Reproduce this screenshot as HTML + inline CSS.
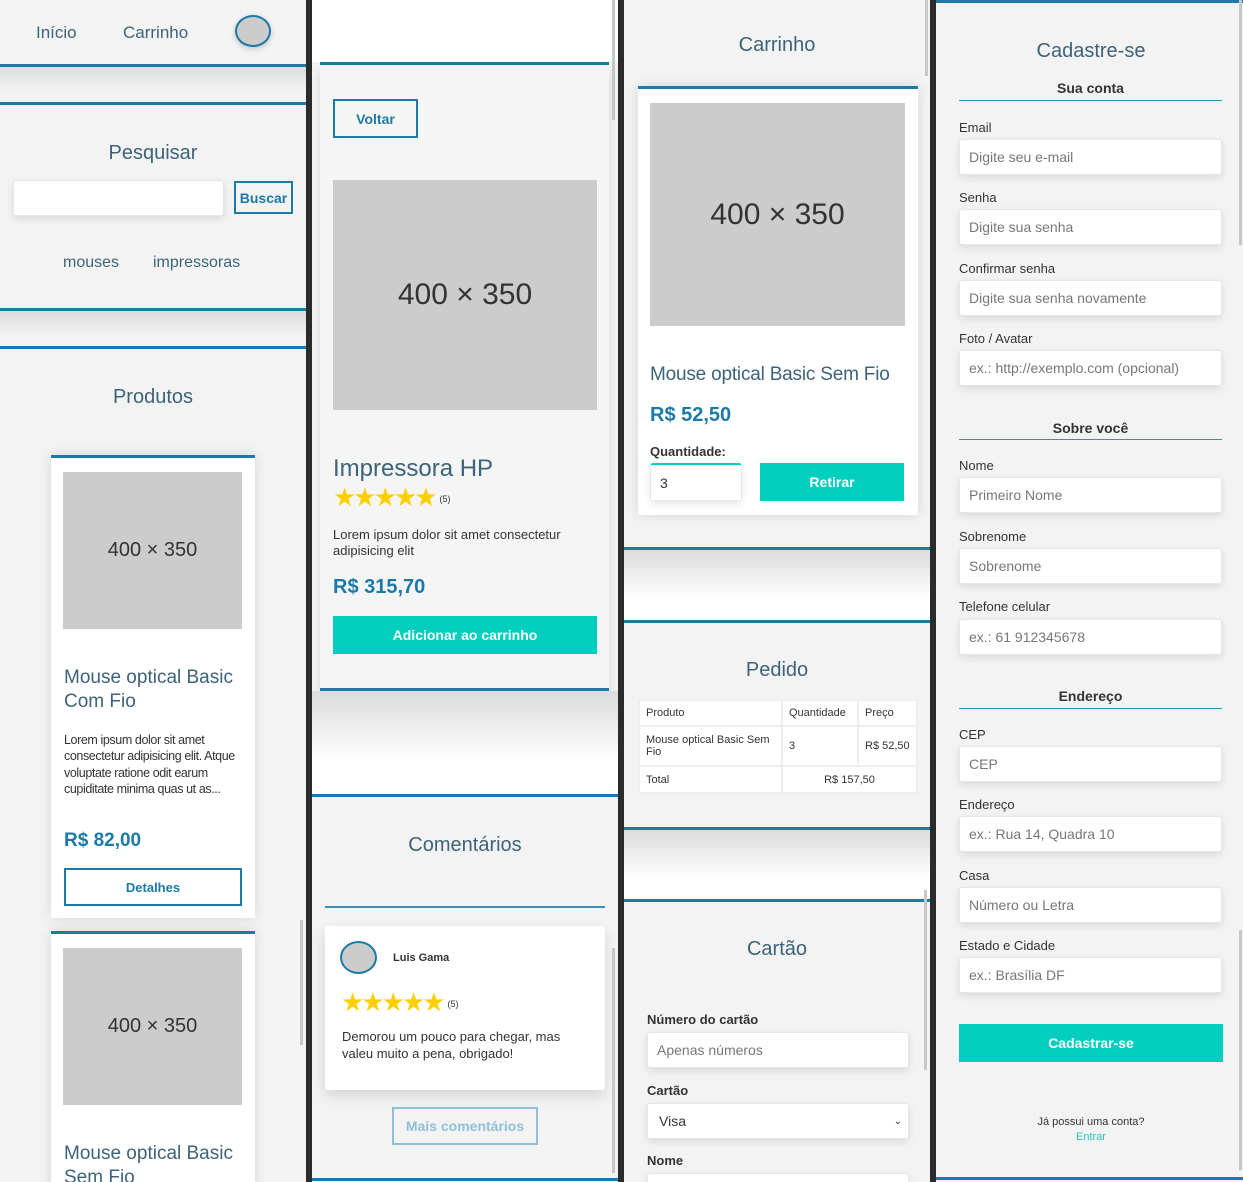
<!DOCTYPE html>
<html><head><meta charset="utf-8"><style>
*{margin:0;padding:0;box-sizing:border-box}
body{width:1243px;height:1182px;background:#2b2b2b;position:relative;overflow:hidden;font-family:"Liberation Sans",sans-serif;color:#333}
.p{position:absolute;top:0;height:1182px;background:#f3f3f3;overflow:hidden}
.a{position:absolute}
.line{position:absolute;height:3px;background:#1b7aa6}
.sh{position:absolute;background:linear-gradient(#dcdcdc,#f3f3f3 70%)}
.shw{position:absolute;background:linear-gradient(#dcdcdc,#fff 70%)}
.h{position:absolute;text-align:center;color:#3d6379;font-size:20px}
.ph{position:absolute;background:#ccc;color:#333;display:flex;align-items:center;justify-content:center}
.card{position:absolute;background:#fff;border-top:3px solid #1b7aa6;box-shadow:0 0 12px rgba(0,0,0,.12)}
.inp{position:absolute;background:#fff;border:1px solid #e6e6e6;border-radius:3px;box-shadow:0 3px 8px rgba(0,0,0,.1);font-size:14px;color:#777;padding-left:9px;display:flex;align-items:center}
.lbl{position:absolute;font-size:13px;color:#333}
.btn{position:absolute;background:#00cfc0;color:#fff;font-weight:bold;font-size:14px;display:flex;align-items:center;justify-content:center}
.ob{position:absolute;border:2px solid #1b7aa6;color:#1b7aa6;font-weight:bold;font-size:14px;display:flex;align-items:center;justify-content:center}
.stars{position:absolute;color:#fcd000;font-size:26px;letter-spacing:-3px;line-height:26px}
.stars sup{font-size:9px;color:#333;letter-spacing:0;vertical-align:top;position:relative;top:2px;left:5px}
.blue{color:#1b7aa6}
td{border:2px solid #eee;padding:4px 6px;font-size:11px;color:#333}
</style></head><body>

<!-- Panel 1 -->
<div class="p" style="left:0;width:306px">
 <div class="a" style="left:36px;top:23px;font-size:17px;color:#3d6379">Início</div>
 <div class="a" style="left:123px;top:23px;font-size:17px;color:#3d6379">Carrinho</div>
 <div class="a" style="left:235px;top:15px;width:36px;height:32px;border-radius:50%;background:#ccc;border:2px solid #1b7aa6;box-shadow:0 2px 6px rgba(0,0,0,.2)"></div>
 <div class="line" style="left:0;top:64px;width:306px"></div>
 <div class="sh" style="left:0;top:67px;width:306px;height:35px"></div>
 <div class="line" style="left:0;top:102px;width:306px"></div>
 <div class="h" style="left:0;top:142px;width:306px">Pesquisar</div>
 <div class="inp" style="left:13px;top:180px;width:211px;height:36px"></div>
 <div class="ob" style="left:234px;top:181px;width:59px;height:33px">Buscar</div>
 <div class="a" style="left:63px;top:254px;font-size:16px;color:#3d6379">mouses</div>
 <div class="a" style="left:153px;top:254px;font-size:16px;color:#3d6379">impressoras</div>
 <div class="line" style="left:0;top:308px;width:306px"></div>
 <div class="sh" style="left:0;top:311px;width:306px;height:35px"></div>
 <div class="line" style="left:0;top:346px;width:306px"></div>
 <div class="h" style="left:0;top:386px;width:306px">Produtos</div>
 <div class="card" style="left:51px;top:455px;width:204px;height:463px">
  <div class="ph" style="left:12px;top:14px;width:179px;height:157px;font-size:20px">400 × 350</div>
  <div class="a" style="left:13px;top:208px;font-size:19px;color:#3d6379;line-height:24px;width:185px">Mouse optical Basic Com Fio</div>
  <div class="a" style="left:13px;top:274px;font-size:12.5px;line-height:16.3px;width:182px;letter-spacing:-0.4px">Lorem ipsum dolor sit amet consectetur adipisicing elit. Atque voluptate ratione odit earum cupiditate minima quas ut as...</div>
  <div class="a blue" style="left:13px;top:372px;font-size:19px;font-weight:bold">R$ 82,00</div>
  <div class="ob" style="left:13px;top:410px;width:178px;height:38px;font-size:13px">Detalhes</div>
 </div>
 <div class="card" style="left:51px;top:931px;width:204px;height:300px">
  <div class="ph" style="left:12px;top:14px;width:179px;height:157px;font-size:20px">400 × 350</div>
  <div class="a" style="left:13px;top:208px;font-size:19px;color:#3d6379;line-height:24px;width:185px">Mouse optical Basic Sem Fio</div>
 </div>
 <div class="a" style="left:300px;top:920px;width:3px;height:125px;background:#c8c8c8"></div>
</div>

<!-- Panel 2 -->
<div class="p" style="left:312px;width:306px">
 <div class="a" style="left:0;top:0;width:306px;height:62px;background:#fff"></div>
 <div class="a" style="left:300px;top:0;width:3px;height:120px;background:#c8c8c8"></div>
 <div class="line" style="left:8px;top:62px;width:289px"></div>
 <div class="a" style="left:8px;top:65px;width:289px;height:625px;background:#f5f5f5;box-shadow:0 6px 10px rgba(0,0,0,.12)"></div>
 <div class="ob" style="left:21px;top:99px;width:85px;height:39px">Voltar</div>
 <div class="ph" style="left:21px;top:180px;width:264px;height:230px;font-size:30px">400 × 350</div>
 <div class="a" style="left:21px;top:455px;font-size:24px;color:#3d6379">Impressora HP</div>
 <div class="stars" style="left:21px;top:484px">★★★★★<sup>(5)</sup></div>
 <div class="a" style="left:21px;top:527px;font-size:13px;line-height:16px;width:260px">Lorem ipsum dolor sit amet consectetur adipisicing elit</div>
 <div class="a blue" style="left:21px;top:576px;font-size:20px;font-weight:bold">R$ 315,70</div>
 <div class="btn" style="left:21px;top:616px;width:264px;height:38px">Adicionar ao carrinho</div>
 <div class="line" style="left:8px;top:688px;width:289px"></div>
 <div class="shw" style="left:0;top:691px;width:306px;height:103px"></div>
 <div class="line" style="left:0;top:794px;width:306px"></div>
 <div class="h" style="left:0;top:834px;width:306px">Comentários</div>
 <div class="a" style="left:13px;top:906px;width:280px;height:2px;background:#3a8fb5"></div>
 <div class="a" style="left:13px;top:926px;width:280px;height:164px;background:#fff;border-radius:3px;box-shadow:0 6px 14px rgba(0,0,0,.13)"></div>
 <div class="a" style="left:28px;top:941px;width:37px;height:33px;border-radius:50%;background:#ccc;border:2px solid #1b7aa6"></div>
 <div class="a" style="left:81px;top:952px;font-size:11px;font-weight:bold;color:#333">Luis Gama</div>
 <div class="stars" style="left:29px;top:989px">★★★★★<sup>(5)</sup></div>
 <div class="a" style="left:30px;top:1028px;font-size:13px;line-height:17px;width:250px">Demorou um pouco para chegar, mas valeu muito a pena, obrigado!</div>
 <div class="ob" style="left:80px;top:1107px;width:146px;height:38px;border-color:#8fc0d6;color:#8fc0d6">Mais comentários</div>
 <div class="a" style="left:300px;top:948px;width:3px;height:225px;background:#c8c8c8"></div>
 <div class="line" style="left:0;top:1178px;width:306px"></div>
</div>

<!-- Panel 3 -->
<div class="p" style="left:624px;width:306px">
 <div class="a" style="left:301px;top:0;width:3px;height:76px;background:#c8c8c8"></div>
 <div class="h" style="left:0;top:34px;width:306px">Carrinho</div>
 <div class="card" style="left:14px;top:86px;width:280px;height:429px">
  <div class="ph" style="left:12px;top:14px;width:255px;height:223px;font-size:30px">400 × 350</div>
  <div class="a" style="left:12px;top:275px;font-size:19px;color:#3d6379;white-space:nowrap;letter-spacing:-0.2px">Mouse optical Basic Sem Fio</div>
  <div class="a blue" style="left:12px;top:315px;font-size:20px;font-weight:bold">R$ 52,50</div>
  <div class="a" style="left:12px;top:355px;font-size:13px;font-weight:bold">Quantidade:</div>
  <div class="inp" style="left:12px;top:374px;width:92px;height:38px;border-top:2px solid #00cfc0;color:#333">3</div>
  <div class="btn" style="left:122px;top:374px;width:144px;height:38px">Retirar</div>
 </div>
 <div class="line" style="left:0;top:547px;width:306px"></div>
 <div class="shw" style="left:0;top:550px;width:306px;height:70px"></div>
 <div class="line" style="left:0;top:620px;width:306px"></div>
 <div class="h" style="left:0;top:659px;width:306px">Pedido</div>
 <table class="a" style="left:14px;top:699px;width:280px;background:#fff;border-collapse:collapse">
  <tr style="height:26px"><td style="width:143px">Produto</td><td style="width:76px">Quantidade</td><td style="white-space:nowrap">Preço</td></tr>
  <tr style="height:40px"><td>Mouse optical Basic Sem Fio</td><td>3</td><td style="white-space:nowrap">R$ 52,50</td></tr>
  <tr style="height:27px"><td>Total</td><td colspan="2" style="text-align:center">R$ 157,50</td></tr>
 </table>
 <div class="line" style="left:0;top:827px;width:306px"></div>
 <div class="shw" style="left:0;top:830px;width:306px;height:70px"></div>
 <div class="line" style="left:0;top:899px;width:306px"></div>
 <div class="a" style="left:300px;top:890px;width:3px;height:180px;background:#c8c8c8"></div>
 <div class="h" style="left:0;top:938px;width:306px">Cartão</div>
 <div class="lbl" style="left:23px;top:1012px;font-weight:bold">Número do cartão</div>
 <div class="inp" style="left:23px;top:1032px;width:262px;height:36px">Apenas números</div>
 <div class="lbl" style="left:23px;top:1083px;font-weight:bold">Cartão</div>
 <div class="inp" style="left:23px;top:1103px;width:262px;height:36px;color:#333;padding-left:11px">Visa<span style="position:absolute;right:6px;font-size:10px">⌄</span></div>
 <div class="lbl" style="left:23px;top:1153px;font-weight:bold">Nome</div>
 <div class="inp" style="left:23px;top:1173px;width:262px;height:36px"></div>
</div>

<!-- Panel 4 -->
<div class="p" style="left:936px;width:307px">
 <div class="line" style="left:0;top:0;width:307px"></div>
 <div class="a" style="left:303px;top:0;width:3px;height:245px;background:#c8c8c8"></div>
 <div class="a" style="left:303px;top:930px;width:3px;height:240px;background:#c8c8c8"></div>
 <div class="h" style="left:0;top:40px;width:310px">Cadastre-se</div>
 <div class="a" style="left:23px;top:80px;width:263px;text-align:center;font-size:14px;font-weight:bold;color:#333">Sua conta</div>
 <div class="a" style="left:23px;top:100px;width:263px;height:1px;background:#3a8fb5"></div>
 <div class="lbl" style="left:23px;top:120px">Email</div>
 <div class="inp" style="left:23px;top:139px;width:263px;height:36px">Digite seu e-mail</div>
 <div class="lbl" style="left:23px;top:190px">Senha</div>
 <div class="inp" style="left:23px;top:209px;width:263px;height:36px">Digite sua senha</div>
 <div class="lbl" style="left:23px;top:261px">Confirmar senha</div>
 <div class="inp" style="left:23px;top:280px;width:263px;height:36px">Digite sua senha novamente</div>
 <div class="lbl" style="left:23px;top:331px">Foto / Avatar</div>
 <div class="inp" style="left:23px;top:350px;width:263px;height:36px">ex.: http://exemplo.com (opcional)</div>
 <div class="a" style="left:23px;top:420px;width:263px;text-align:center;font-size:14px;font-weight:bold">Sobre você</div>
 <div class="a" style="left:23px;top:439px;width:263px;height:1px;background:#3a8fb5"></div>
 <div class="lbl" style="left:23px;top:458px">Nome</div>
 <div class="inp" style="left:23px;top:477px;width:263px;height:36px">Primeiro Nome</div>
 <div class="lbl" style="left:23px;top:529px">Sobrenome</div>
 <div class="inp" style="left:23px;top:548px;width:263px;height:36px">Sobrenome</div>
 <div class="lbl" style="left:23px;top:599px">Telefone celular</div>
 <div class="inp" style="left:23px;top:619px;width:263px;height:36px">ex.: 61 912345678</div>
 <div class="a" style="left:23px;top:688px;width:263px;text-align:center;font-size:14px;font-weight:bold">Endereço</div>
 <div class="a" style="left:23px;top:708px;width:263px;height:1px;background:#3a8fb5"></div>
 <div class="lbl" style="left:23px;top:727px">CEP</div>
 <div class="inp" style="left:23px;top:746px;width:263px;height:36px">CEP</div>
 <div class="lbl" style="left:23px;top:797px">Endereço</div>
 <div class="inp" style="left:23px;top:816px;width:263px;height:36px">ex.: Rua 14, Quadra 10</div>
 <div class="lbl" style="left:23px;top:868px">Casa</div>
 <div class="inp" style="left:23px;top:887px;width:263px;height:36px">Número ou Letra</div>
 <div class="lbl" style="left:23px;top:938px">Estado e Cidade</div>
 <div class="inp" style="left:23px;top:957px;width:263px;height:36px">ex.: Brasília DF</div>
 <div class="btn" style="left:23px;top:1024px;width:264px;height:38px">Cadastrar-se</div>
 <div class="a" style="left:0;top:1115px;width:310px;text-align:center;font-size:11px;line-height:15px">Já possui uma conta?<br><span style="color:#2cc5bc">Entrar</span></div>
 <div class="line" style="left:0;top:1177px;width:307px"></div>
</div>
</body></html>
